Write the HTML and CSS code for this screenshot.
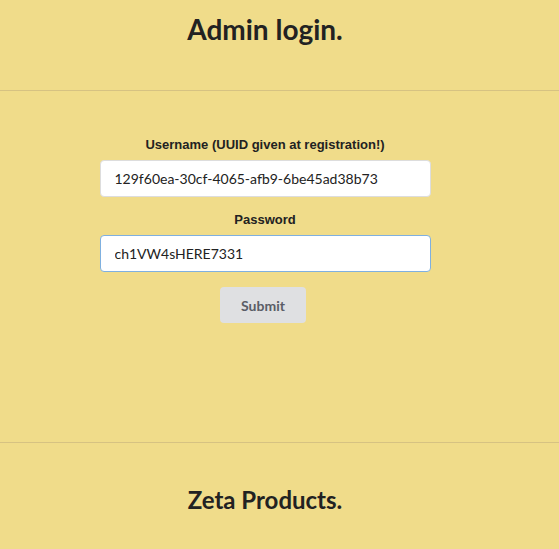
FILE: index.html
```html
<!DOCTYPE html>
<html>
<head>
<meta charset="utf-8">
<link rel="stylesheet" href="styles.css">
</head>
<body>
<div class="page">
  <header class="top">
    <h1 class="title">Admin login.</h1>
  </header>
  <main class="main">
    <form class="form">
      <label class="label">Username (UUID given at registration!)</label>
      <input class="field" type="text" value="129f60ea-30cf-4065-afb9-6be45ad38b73">
      <label class="label">Password</label>
      <input class="field focused" type="text" value="ch1VW4sHERE7331">
      <button class="submit" type="button">Submit</button>
    </form>
  </main>
  <footer class="bottom">
    <h2 class="title small">Zeta Products.</h2>
  </footer>
</div>
</body>
</html>
```
FILE: styles.css
```css
html, body {
  margin: 0;
  padding: 0;
  background: #f0dc8a;
  height: 100%;
}
.page {
  width: 100%;
  min-height: 549px;
  font-family: Lato, "Liberation Sans", sans-serif;
  color: #222;
}
.top {
  box-sizing: border-box;
  height: 91px;
  padding-top: 12px;
  border-bottom: 1px solid #d6c282;
}
.title {
  width: 530px;
  margin: 0;
  text-align: center;
  font-family: Lato, sans-serif;
  font-weight: 700;
  font-size: 28px;
  line-height: 34px;
  color: #222;
}
.title.small {
  font-size: 24px;
  line-height: 30px;
}
.main {
  box-sizing: border-box;
  height: 351px;
  padding-top: 46px;
}
.form {
  width: 530px;
  display: flex;
  flex-direction: column;
  align-items: center;
}
.label {
  font-family: "Liberation Sans", Arial, sans-serif;
  font-weight: 700;
  font-size: 13px;
  line-height: 16px;
  color: #222;
  margin-bottom: 7px;
}
.field {
  box-sizing: border-box;
  width: 331px;
  height: 37px;
  margin: 0 0 15px 0;
  padding: 0 14px;
  border: 1px solid #ddd;
  border-radius: 4px;
  background: #fff;
  font-family: Lato, sans-serif;
  font-size: 14px;
  color: #222;
  outline: none;
}
.field.focused {
  border-color: #7fb0e0;
}
.submit {
  margin: 0 4px 0 0;
  width: 86px;
  height: 36px;
  border: none;
  border-radius: 4px;
  background: #dfe0e2;
  color: #5a5d66;
  font-family: Lato, sans-serif;
  font-weight: 700;
  font-size: 14px;
}
.bottom {
  box-sizing: border-box;
  border-top: 1px solid #d6c282;
  height: 107px;
  padding-top: 42px;
}
```
